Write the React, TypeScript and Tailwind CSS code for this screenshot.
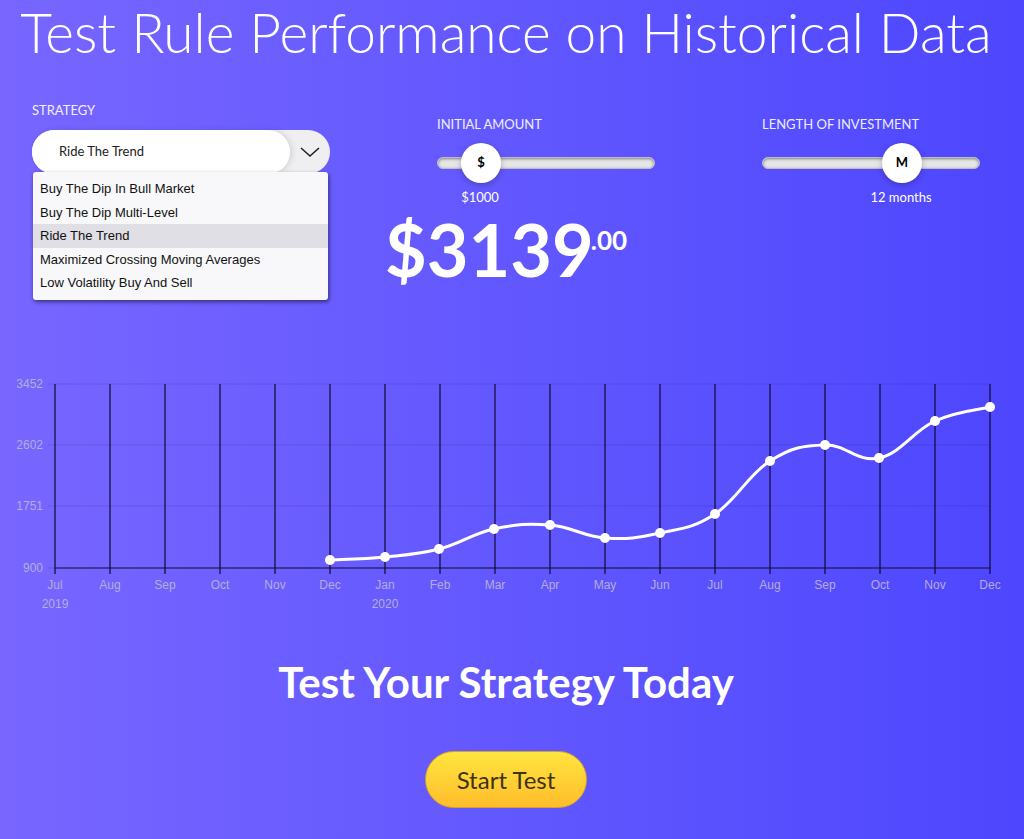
import { useState } from "react";

const strategies = [
  "Buy The Dip In Bull Market",
  "Buy The Dip Multi-Level",
  "Ride The Trend",
  "Maximized Crossing Moving Averages",
  "Low Volatility Buy And Sell",
];

const months = [
  "Jul", "Aug", "Sep", "Oct", "Nov", "Dec", "Jan", "Feb", "Mar",
  "Apr", "May", "Jun", "Jul", "Aug", "Sep", "Oct", "Nov", "Dec",
];

// pixel coords of the equity curve (Dec 2019 -> Dec 2020)
const points: [number, number][] = [
  [330, 560], [385, 557], [439, 549], [494, 529], [550, 525], [605, 538],
  [660, 533], [715, 514], [770, 461], [825, 445], [879, 458], [935, 421], [990, 407],
];

const yTicks = [
  { label: "3452", y: 384 },
  { label: "2602", y: 445 },
  { label: "1751", y: 506 },
  { label: "900", y: 568 },
];

const TOP = 370;

function smoothPath(pts: [number, number][]) {
  let d = `M${pts[0][0]},${pts[0][1] - TOP}`;
  for (let i = 0; i < pts.length - 1; i++) {
    const p0 = pts[i - 1] || pts[i];
    const p1 = pts[i];
    const p2 = pts[i + 1];
    const p3 = pts[i + 2] || p2;
    const t = 0.2;
    const c1x = p1[0] + (p2[0] - p0[0]) * t;
    const c1y = p1[1] + (p2[1] - p0[1]) * t;
    const c2x = p2[0] - (p3[0] - p1[0]) * t;
    const c2y = p2[1] - (p3[1] - p1[1]) * t;
    d += ` C${c1x},${c1y - TOP} ${c2x},${c2y - TOP} ${p2[0]},${p2[1] - TOP}`;
  }
  return d;
}

function Slider({ label, icon, value, pos }: { label: string; icon: string; value: string; pos: number }) {
  return (
    <div className="w-[218px] pt-[14px]">
      <div className="text-[13px] uppercase text-white/90 leading-[20px]">{label}</div>
      <div className="relative mt-[23px] h-[12px] rounded-full bg-[#e6e6e6] shadow-[inset_0_1px_3px_rgba(0,0,0,0.45)] border border-[#bdbdbd]">
        <div
          className="absolute top-1/2 -translate-x-1/2 -translate-y-1/2 w-[40px] h-[40px] rounded-full bg-white shadow-[0_2px_6px_rgba(0,0,0,0.25)] flex items-center justify-center text-[13px] font-bold text-black"
          style={{ left: pos }}
        >
          {icon}
        </div>
      </div>
      <div className="relative h-[30px]">
        <span
          className="absolute top-[22px] -translate-x-1/2 text-[13px] text-white whitespace-nowrap leading-none"
          style={{ left: pos }}
        >
          {value}
        </span>
      </div>
    </div>
  );
}

export default function App() {
  const [selected] = useState("Ride The Trend");

  return (
    <div
      className="min-h-[839px] w-full bg-gradient-to-r from-[#7866ff] to-[#4d46fe] text-white overflow-hidden"
      style={{ fontFamily: "Lato, 'Open Sans', sans-serif" }}
    >
      {/* Heading */}
      <h1 className="w-[1012px] text-center text-[55px] font-light leading-[66px] -mt-[1px]">
        Test Rule Performance on Historical Data
      </h1>

      {/* Controls */}
      <div className="relative flex gap-[107px] pl-[32px] mt-[35px]">
        <div className="relative w-[298px]">
          <div className="text-[13px] uppercase text-white/90 leading-[20px]">Strategy</div>
          <div className="mt-[10px] h-[44px] rounded-full bg-[#efeff1] flex items-center">
            <div className="h-[44px] w-[258px] rounded-full bg-white shadow-[2px_0_6px_rgba(0,0,0,0.12)] flex items-center pl-[27px] text-[13px] text-[#222]">
              {selected}
            </div>
            <svg width="22" height="14" viewBox="0 0 22 14" className="ml-[9px]">
              <path d="M2 3 L11 11 L20 3" fill="none" stroke="#222" strokeWidth="1.6" />
            </svg>
          </div>
          {/* open menu */}
          <ul
            className="absolute left-[1px] top-[72px] w-[295px] bg-[#f8f8fa] rounded-[3px] shadow-[1px_2px_4px_rgba(0,0,0,0.5)] py-[5px] text-[13px] text-[#111] z-10"
            style={{ fontFamily: "'Liberation Sans', Arial, sans-serif" }}
          >
            {strategies.map((s) => (
              <li
                key={s}
                className={`h-[23.5px] flex items-center px-[7px] ${s === selected ? "bg-[#e0dfe5]" : ""}`}
              >
                {s}
              </li>
            ))}
          </ul>
        </div>

        <div>
          <Slider label="Initial amount" icon="$" value="$1000" pos={43} />
        </div>
        <div>
          <Slider label="Length of investment" icon="M" value="12 months" pos={139} />
        </div>
      </div>

      {/* Result */}
      <div className="pl-[385px] mt-[14px] flex items-start font-bold leading-none">
        <span className="text-[72px] leading-[72px]">$3139</span>
        <span className="text-[26px] mt-[14px] -ml-[3px]">.00</span>
      </div>

      {/* Chart */}
      <svg width="1024" height="250" className="block mt-[85px]" style={{ fontFamily: "'Liberation Sans', Arial, sans-serif" }}>
        {yTicks.map((t) => (
          <g key={t.label}>
            <line x1="48" x2="990" y1={t.y - TOP} y2={t.y - TOP} stroke="rgba(0,0,0,0.12)" />
            <text x="43" y={t.y - TOP + 4} textAnchor="end" fontSize="12" fill="#b3acdc">
              {t.label}
            </text>
          </g>
        ))}
        <line x1="55" x2="990" y1={568 - TOP} y2={568 - TOP} stroke="#15103a" strokeWidth="1.2" />
        {months.map((m, i) => {
          const x = 55 + i * 55;
          return (
            <g key={i}>
              <line x1={x} x2={x} y1={384 - TOP} y2={574 - TOP} stroke="#0e0a2c" strokeWidth="1.2" />
              <text x={x} y={589 - TOP} textAnchor="middle" fontSize="12" fill="#b3acdc">
                {m}
              </text>
            </g>
          );
        })}
        <text x="55" y={608 - TOP} textAnchor="middle" fontSize="12" fill="#b3acdc">2019</text>
        <text x="385" y={608 - TOP} textAnchor="middle" fontSize="12" fill="#b3acdc">2020</text>
        <path d={smoothPath(points)} fill="none" stroke="#fff" strokeWidth="3" />
        {points.map(([x, y], i) => (
          <circle key={i} cx={x} cy={y - TOP} r="5" fill="#fff" />
        ))}
      </svg>

      {/* CTA */}
      <div className="w-[1012px]">
        <h2 className="text-center text-[42px] font-bold leading-[50px] mt-[37px]">Test Your Strategy Today</h2>
        <div className="flex justify-center mt-[44px]">
          <button className="w-[162px] h-[57px] rounded-full bg-gradient-to-b from-[#ffe53f] to-[#ffbd2b] border border-[#d9a521] text-[24px] text-[#3d3413]">
            Start Test
          </button>
        </div>
      </div>
    </div>
  );
}
